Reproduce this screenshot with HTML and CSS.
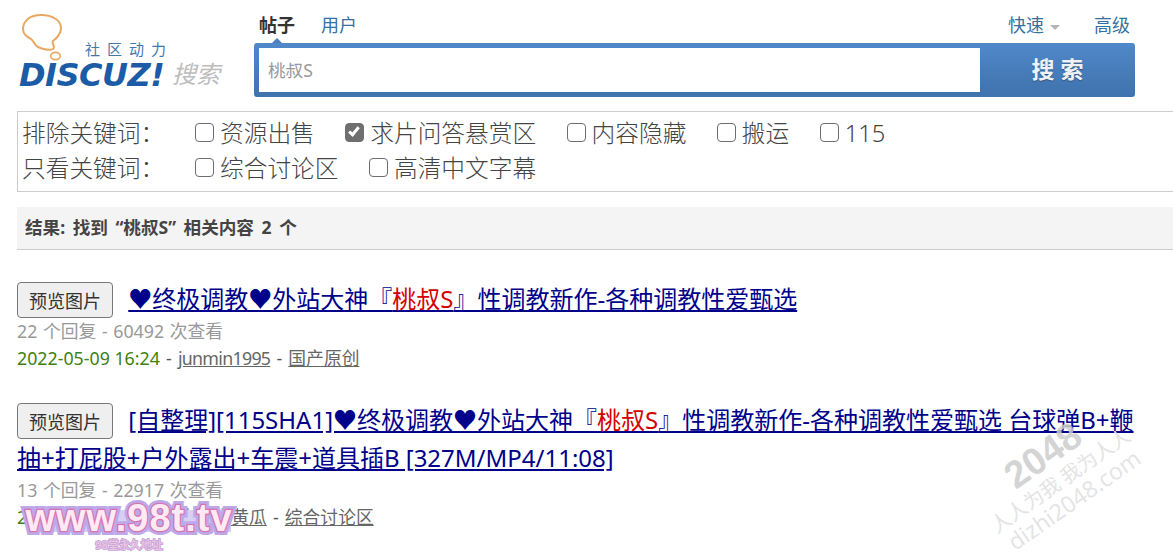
FILE: index.html
```html
<!DOCTYPE html>
<html lang="zh-CN">
<head>
    <meta charset="UTF-8">
    <title>搜索 - 桃叔S</title>
    <link rel="stylesheet" href="styles.css">
</head>
<body>
    <div class="header">
        <a class="logo" href="#">
            <svg class="logo-bubble" width="50" height="50" viewBox="0 0 50 50">
                <path d="M21 2C10 2 3 8 3 16c0 5 4 8 8 10 3 2 3 6 7 8 4 2 12 4 15 2 3-2-2-6 0-8 4-3 8-7 8-13C41 7 32 2 21 2z" fill="none" stroke="#e8a862" stroke-width="2"/>
                <ellipse cx="35.5" cy="43" rx="4.8" ry="3.6" fill="none" stroke="#e8a862" stroke-width="1.6"/>
            </svg>
            <span class="logo-slogan">社区动力</span>
            <span class="logo-brand">DISCUZ!</span>
            <span class="logo-search">搜索</span>
        </a>
        <div class="search-panel">
            <div class="search-top">
                <div class="search-tabs">
                    <a class="tab active" href="#">帖子</a>
                    <a class="tab" href="#">用户</a>
                </div>
                <div class="search-links">
                    <a href="#">快速<i class="caret"></i></a>
                    <a href="#">高级</a>
                </div>
            </div>
            <form class="search-form">
                <input class="search-input" type="text" value="桃叔S">
                <button class="search-button" type="button">搜 索</button>
            </form>
        </div>
    </div>

    <div class="filter-box">
        <div class="filter-row">
            <span class="filter-label">排除关键词：</span>
            <label><input type="checkbox">资源出售</label>
            <label><input type="checkbox" checked>求片问答悬赏区</label>
            <label><input type="checkbox">内容隐藏</label>
            <label><input type="checkbox">搬运</label>
            <label><input type="checkbox">115</label>
        </div>
        <div class="filter-row">
            <span class="filter-label">只看关键词：</span>
            <label><input type="checkbox">综合讨论区</label>
            <label><input type="checkbox">高清中文字幕</label>
        </div>
    </div>

    <div class="result-bar">结果: 找到 “桃叔S” 相关内容 2 个</div>

    <ul class="result-list">
        <li>
            <div class="result-title">
                <button class="preview-button" type="button">预览图片</button>
                <a href="#">♥终极调教♥外站大神『<em>桃叔S</em>』性调教新作-各种调教性爱甄选</a>
            </div>
            <p class="stats">22 个回复 - 60492 次查看</p>
            <p class="meta"><span class="date">2022-05-09 16:24</span> - <a class="latin" href="#">junmin1995</a> - <a href="#">国产原创</a></p>
        </li>
        <li>
            <div class="result-title">
                <button class="preview-button" type="button">预览图片</button>
                <a href="#">[自整理][115SHA1]♥终极调教♥外站大神『<em>桃叔S</em>』性调教新作-各种调教性爱甄选 台球弹B+鞭抽+打屁股+户外露出+车震+道具插B [327M/MP4/11:08]</a>
            </div>
            <p class="stats">13 个回复 - 22917 次查看</p>
            <p class="meta"><span class="date">2022-05-09 16:24</span> - <a href="#">吃瓜大黄瓜</a> - <a href="#">综合讨论区</a></p>
        </li>
    </ul>

    <div class="mark-98">
        <span class="mark-98-url" data-text="www.98t.tv">www.98t.tv</span>
        <span class="mark-98-sub">98堂永久地址</span>
    </div>
    <div class="mark-2048">
        <span class="mark-2048-num">2048</span>
        <span class="mark-2048-sub">人人为我 我为人人</span>
        <span class="mark-2048-url">dizhi2048.com</span>
    </div>
</body>
</html>
```

FILE: styles.css
```css
html, body {
    overflow: hidden;
}

body {
    margin: 0;
    width: 1173px;
    height: 558px;
    padding-left: 17px;
    box-sizing: border-box;
    position: relative;
    background-color: #fff;
    color: #333;
    font-family: "Noto Sans", "Noto Sans CJK SC", sans-serif;
}

.header {
    display: flex;
    height: 111px;
}

/* logo */
.logo {
    display: block;
    position: relative;
    width: 237px;
    flex: none;
    text-decoration: none;
}

.logo-bubble {
    position: absolute;
    left: 3px;
    top: 13px;
}

.logo-slogan {
    position: absolute;
    left: 68px;
    top: 39px;
    font-size: 15px;
    line-height: 20px;
    letter-spacing: 7px;
    white-space: nowrap;
    color: #3f79ae;
}

.logo-brand {
    position: absolute;
    left: 2px;
    top: 57px;
    font-family: "DejaVu Sans", sans-serif;
    font-size: 32px;
    line-height: 36px;
    font-weight: bold;
    font-style: italic;
    letter-spacing: -0.5px;
    color: #1c5ba6;
}

.logo-search {
    position: absolute;
    left: 155px;
    top: 57px;
    font-size: 24px;
    line-height: 34px;
    font-style: italic;
    color: #bdbdbd;
}

/* search */
.search-panel {
    width: 881px;
    flex: none;
}

.search-top {
    display: flex;
    justify-content: space-between;
    height: 43px;
    padding-top: 13px;
    box-sizing: border-box;
    font-size: 18px;
    line-height: 24px;
}

.search-tabs {
    display: flex;
    gap: 26px;
    padding-left: 5px;
}

.tab {
    position: relative;
    color: #36709f;
    text-decoration: none;
}

.tab.active {
    font-weight: bold;
    color: #333;
}

.tab.active::after {
    content: "";
    position: absolute;
    left: 13px;
    top: 25px;
    border: 5px solid transparent;
    border-top: 0;
    border-bottom-color: #4a7fc0;
}

.search-links {
    display: flex;
    gap: 34px;
    padding-right: 5px;
}

.search-links a {
    color: #36709f;
    text-decoration: none;
}

.caret {
    display: inline-block;
    margin-left: 6px;
    vertical-align: middle;
    border: 5.5px solid transparent;
    border-bottom: 0;
    border-top-color: #b5b5b5;
}

.search-form {
    display: flex;
    height: 54px;
    border-radius: 3px;
    background: linear-gradient(#5088c9, #3f72ad);
    box-sizing: border-box;
    padding: 5px 0 5px 5px;
}

.search-input {
    width: 721px;
    height: 44px;
    box-sizing: border-box;
    border: 0;
    outline: 0;
    padding: 0 9px 2px;
    font-family: inherit;
    font-size: 17.6px;
    color: #999;
    background-color: #fff;
}

.search-button {
    flex: 1;
    border: 0;
    padding: 0 0 4px;
    background: transparent;
    color: #eef2f6;
    font-family: inherit;
    font-size: 23px;
    font-weight: bold;
    text-shadow: 0 1px 1px rgba(0, 0, 0, 0.35);
}

/* filter */
.filter-box {
    width: 1170px;
    height: 81px;
    box-sizing: border-box;
    border: 1px solid #ccc;
    padding: 4px 0 0 4px;
    font-size: 23.7px;
    font-weight: 300;
    color: #444;
}

.filter-row {
    display: flex;
    gap: 30.5px;
    height: 35px;
    line-height: 35px;
}

.filter-label {
    width: 142.5px;
}

.filter-row label {
    display: flex;
    align-items: center;
    gap: 6px;
}

.filter-row input {
    appearance: none;
    position: relative;
    width: 19px;
    height: 19px;
    margin: 0 0 3px;
    box-sizing: border-box;
    border: 1.5px solid #6e6e6e;
    border-radius: 4px;
    background-color: #fff;
}

.filter-row input:checked {
    background-color: #6f6f6f;
}

.filter-row input:checked::after {
    content: "";
    position: absolute;
    left: 5px;
    top: 1px;
    width: 6px;
    height: 11px;
    border: solid #fff;
    border-width: 0 3px 3px 0;
    transform: rotate(40deg);
    box-sizing: border-box;
}

.result-bar {
    width: 1156px;
    height: 43px;
    margin-top: 15px;
    padding-left: 8px;
    box-sizing: border-box;
    border-bottom: 1px solid #ccc;
    background-color: #f4f4f4;
    font-size: 17.6px;
    font-weight: bold;
    word-spacing: 3px;
    line-height: 41px;
    color: #444;
}

/* results */
.result-list {
    list-style: none;
    margin: 30px 0 0;
    padding: 0;
    width: 1125px;
}

.result-list li {
    margin-bottom: 29px;
}

.result-title {
    font-size: 24px;
    line-height: 38px;
}

.result-title a {
    color: #00008b;
}

.result-title em {
    font-style: normal;
    color: #d40000;
}

.preview-button {
    width: 96px;
    height: 36px;
    margin-right: 9px;
    padding: 0;
    border: 1px solid #777;
    border-radius: 4px;
    background-color: #efefef;
    color: #333;
    font-family: inherit;
    font-size: 18px;
}

.stats, .meta {
    margin: 0;
    font-size: 17.8px;
    line-height: 27px;
}

.stats {
    color: #999;
    word-spacing: 1px;
}

.meta {
    color: #555;
    word-spacing: 1.5px;
}

.meta a {
    color: #666;
}

.meta .latin {
    letter-spacing: -0.7px;
}

.date {
    color: #3f7f13;
    word-spacing: 0;
}

/* watermarks lie over the page */
.mark-98 {
    position: absolute;
    z-index: 5;
    left: 24px;
    top: 496px;
    width: 210px;
    text-align: center;
}

.mark-98-url {
    display: block;
    position: relative;
    font-family: "Liberation Sans", sans-serif;
    font-size: 38px;
    font-weight: bold;
    line-height: 44px;
    letter-spacing: 1px;
    white-space: nowrap;
    color: #bda9ea;
    -webkit-text-stroke: 8px #bda9ea;
}

/* band behind the letters, hides the page text under the mark */
.mark-98-url::before {
    content: "";
    position: absolute;
    left: 3px;
    right: 3px;
    top: 14px;
    bottom: 8px;
    z-index: -1;
    background-color: #d9cef4;
}

/* letters on top of the lavender halo */
.mark-98-url::after {
    content: attr(data-text);
    position: absolute;
    left: 0;
    right: 0;
    top: 0;
    color: #ffe9f3;
    -webkit-text-stroke: 2.5px #d873b0;
    paint-order: stroke fill;
}

.mark-98-sub {
    display: block;
    margin-top: -2px;
    font-size: 11px;
    line-height: 14px;
    color: #f4c9e0;
    -webkit-text-stroke: 2px #c8a8dc;
    paint-order: stroke fill;
}

.mark-2048 {
    position: absolute;
    left: 961px;
    top: 432px;
    width: 190px;
    transform: rotate(-35deg);
    text-align: center;
    color: #e4e4e4;
    white-space: nowrap;
    pointer-events: none;
}

.mark-2048 span {
    display: block;
}

.mark-2048-num {
    font-family: "Liberation Sans", sans-serif;
    font-size: 38px;
    font-weight: bold;
    line-height: 38px;
    color: rgba(205, 205, 205, 0.85);
}

.mark-2048-sub {
    font-size: 20px;
    line-height: 24px;
}

.mark-2048-url {
    font-family: "Open Sans", sans-serif;
    font-size: 23px;
    line-height: 22px;
}
```
